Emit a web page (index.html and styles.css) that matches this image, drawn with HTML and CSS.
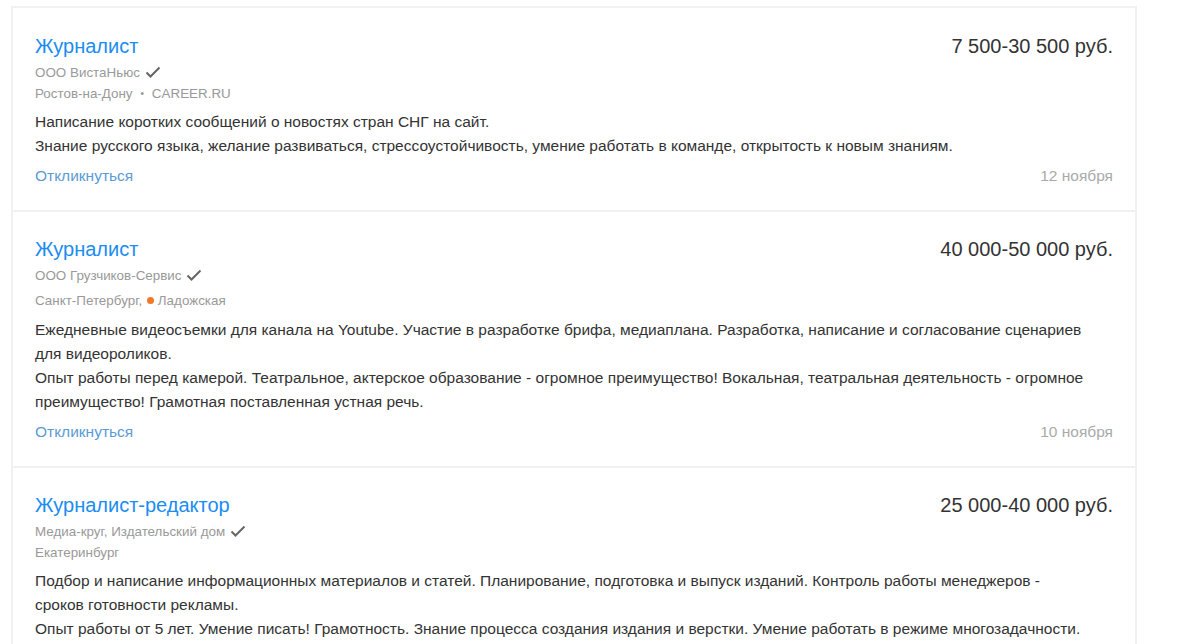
FILE: index.html
```html
<!DOCTYPE html>
<html lang="ru">

<head>
  <meta charset="UTF-8">
  <meta name="viewport" content="width=device-width, initial-scale=1.0">
  <title>Вакансии</title>
  <link rel="stylesheet" href="styles.css">
</head>

<body>

  <div id="list">

    <div class="vacancy">
      <div class="vacancy-head">
        <a class="vacancy-title" href="#">Журналист</a>
        <span class="vacancy-salary">7 500-30 500 руб.</span>
      </div>
      <div class="vacancy-company">ООО ВистаНьюс
        <svg class="check" width="16" height="12" viewBox="0 0 16 12"><path d="M1.5 6.5 L5.5 10.5 L14.5 1.5" fill="none" stroke="#666" stroke-width="2"/></svg>
      </div>
      <div class="vacancy-place">Ростов-на-Дону <span class="dot">&bull;</span> CAREER.RU</div>
      <div class="vacancy-text">
        <p>Написание коротких сообщений о новостях стран СНГ на сайт.</p>
        <p>Знание русского языка, желание развиваться, стрессоустойчивость, умение работать в команде, открытость к новым знаниям.</p>
      </div>
      <div class="vacancy-foot">
        <a class="reply" href="#">Откликнуться</a>
        <span class="date">12 ноября</span>
      </div>
    </div>

    <div class="vacancy">
      <div class="vacancy-head">
        <a class="vacancy-title" href="#">Журналист</a>
        <span class="vacancy-salary">40 000-50 000 руб.</span>
      </div>
      <div class="vacancy-company">ООО Грузчиков-Сервис
        <svg class="check" width="16" height="12" viewBox="0 0 16 12"><path d="M1.5 6.5 L5.5 10.5 L14.5 1.5" fill="none" stroke="#666" stroke-width="2"/></svg>
      </div>
      <div class="vacancy-place metro">Санкт-Петербург, <i class="metro-dot"></i>Ладожская</div>
      <div class="vacancy-text">
        <p>Ежедневные видеосъемки для канала на Youtube. Участие в разработке брифа, медиаплана. Разработка, написание и согласование сценариев для видеороликов.</p>
        <p>Опыт работы перед камерой. Театральное, актерское образование - огромное преимущество! Вокальная, театральная деятельность - огромное преимущество! Грамотная поставленная устная речь.</p>
      </div>
      <div class="vacancy-foot">
        <a class="reply" href="#">Откликнуться</a>
        <span class="date">10 ноября</span>
      </div>
    </div>

    <div class="vacancy">
      <div class="vacancy-head">
        <a class="vacancy-title" href="#">Журналист-редактор</a>
        <span class="vacancy-salary">25 000-40 000 руб.</span>
      </div>
      <div class="vacancy-company">Медиа-круг, Издательский дом
        <svg class="check" width="16" height="12" viewBox="0 0 16 12"><path d="M1.5 6.5 L5.5 10.5 L14.5 1.5" fill="none" stroke="#666" stroke-width="2"/></svg>
      </div>
      <div class="vacancy-place">Екатеринбург</div>
      <div class="vacancy-text">
        <p>Подбор и написание информационных материалов и статей. Планирование, подготовка и выпуск изданий. Контроль работы менеджеров - сроков готовности рекламы.</p>
        <p>Опыт работы от 5 лет. Умение писать! Грамотность. Знание процесса создания издания и верстки. Умение работать в режиме многозадачности.</p>
      </div>
      <div class="vacancy-foot">
        <a class="reply" href="#">Откликнуться</a>
        <span class="date">5 ноября</span>
      </div>
    </div>

  </div>

</body>

</html>
```

FILE: styles.css
```css
* {
  margin: 0;
  padding: 0;
}

body {
  font-family: "Liberation Sans", Arial, sans-serif;
  color: #333333;
  background: #ffffff;
}

a {
  text-decoration: none;
}

#list {
  width: 1122px;
  margin: 6px 0 0 11px;
  border: 2px solid #f1f1f1;
  border-bottom: none;
}

.vacancy {
  padding: 26px 22px 24px 22px;
  border-bottom: 2px solid #f1f1f1;
}

.vacancy + .vacancy {
  padding-top: 25px;
}

.vacancy-head {
  display: flex;
  justify-content: space-between;
  align-items: center;
  font-size: 20px;
  line-height: 24px;
}

.vacancy-title {
  color: #1a8cf2;
}

.vacancy-salary {
  color: #333333;
}

.vacancy-company {
  margin-top: 4px;
  font-size: 13.4px;
  line-height: 21px;
  color: #999999;
}

.check {
  vertical-align: -1px;
  margin-left: 1px;
}

.vacancy-place {
  font-size: 13.4px;
  line-height: 21px;
  color: #999999;
}

.vacancy-place .dot {
  margin: 0 4px;
  font-size: 11px;
  vertical-align: 1px;
}

.vacancy-place.metro {
  margin-top: 3px;
  line-height: 23px;
}

.metro-dot {
  display: inline-block;
  width: 7px;
  height: 7px;
  margin: 0 4px 0 1px;
  border-radius: 50%;
  background: #f07828;
  vertical-align: 1px;
}

.vacancy-text {
  max-width: 1052px;
  margin-top: 6px;
  font-size: 15.5px;
  line-height: 24px;
}

.vacancy-foot {
  display: flex;
  justify-content: space-between;
  margin-top: 8px;
  font-size: 15.5px;
  line-height: 20px;
}

.reply {
  color: #5b9bd5;
}

.date {
  color: #aaaaaa;
}
```
